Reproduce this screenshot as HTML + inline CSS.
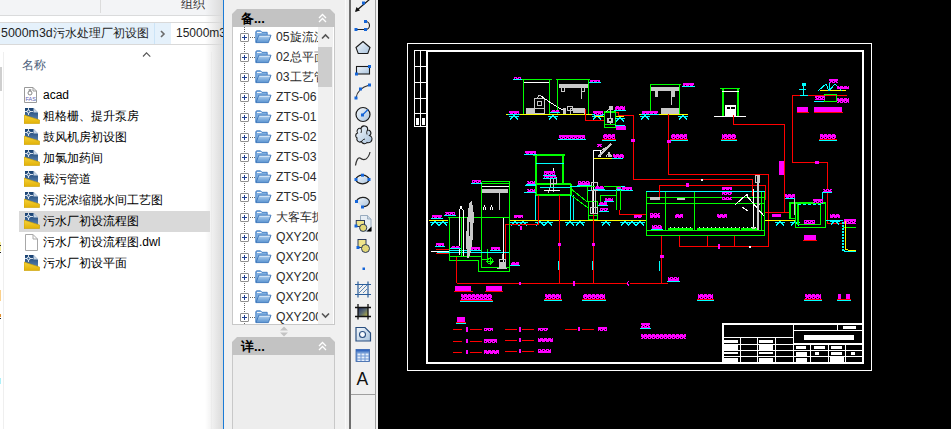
<!DOCTYPE html>
<html><head><meta charset="utf-8">
<style>
*{margin:0;padding:0;box-sizing:border-box}
html,body{width:951px;height:429px;overflow:hidden;background:#000;font-family:"Liberation Sans",sans-serif;}
.a{position:absolute}
#exp{left:0;top:0;width:223px;height:429px;background:#fff;overflow:hidden}
#exp svg{z-index:2}
#ribbon{left:0;top:0;width:223px;height:16px;background:#f3f4f6;border-bottom:1px solid #dadbdc}
#crumb{left:0;top:22px;width:223px;height:23px;background:#fff;border-top:1px solid #d9d9d9;border-bottom:1px solid #d9d9d9}
.t12{font-size:12px;line-height:14px;color:#1e1e1e;white-space:nowrap;z-index:3}
.row{position:absolute;left:19px;width:191px;height:21px;z-index:3}
.row .tx{position:absolute;left:24px;top:3px;font-size:12px;line-height:15px;color:#000;white-space:nowrap}
#blue{left:223px;top:0;width:1px;height:429px;background:#1b7bd6}
#mid{left:224px;top:0;width:154px;height:429px;background:#f0f0f0}
.tr{position:absolute;left:0;width:120px;height:20px}
.tr .tx{position:absolute;left:44px;top:2px;font-size:12.5px;line-height:15px;color:#222;white-space:nowrap}
</style></head><body>
<!-- explorer -->
<div id="exp" class="a">
  <div id="ribbon" class="a"></div>
  <div class="a" style="left:100px;top:0;width:1px;height:13px;background:#dcdcdc"></div>
  <div class="a t12" style="left:181px;top:-3px;color:#333;font-size:12.4px">组织</div>
  <div id="crumb" class="a"></div>
  <div class="a" style="left:0;top:23px;width:154px;height:21px;background:#e5f1fb"></div>
  <div class="a" style="left:154px;top:23px;width:1px;height:21px;background:#cce4f7"></div>
  <div class="a" style="left:155px;top:23px;width:16px;height:21px;background:#e5f1fb"></div>
  <div class="a t12" style="left:1px;top:26px;font-size:12.4px">5000m3d污水处理厂初设图</div>
  <svg class="a" style="left:159px;top:30px" width="8" height="8" viewBox="0 0 8 8"><path d="M2 1L5 4L2 7" fill="none" stroke="#6a6a6a" stroke-width="1.6"/></svg>
  <div class="a t12" style="left:176px;top:26px">15000m3d</div>
  <div class="a" style="left:205px;top:0;width:18px;height:429px;background:linear-gradient(90deg,rgba(220,220,220,0),#dadada)"></div>
  <div class="a" style="left:3px;top:52px;width:1px;height:377px;background:#efefef"></div>
  <div class="a" style="left:0;top:67px;width:2px;height:24px;background:#cfcfcf"></div>
  <div class="a" style="left:0;top:242px;width:1px;height:9px;background:#f7ec9a"></div>
  <div class="a" style="left:0;top:245px;width:1px;height:1px;background:#222"></div>
  <div class="a" style="left:0;top:252px;width:1px;height:1px;background:#222"></div>
  <div class="a" style="left:0;top:290px;width:1px;height:11px;background:#fbd08a"></div>
  <div class="a" style="left:0;top:314px;width:1px;height:3px;background:#e09030"></div>
  <div class="a" style="left:0;top:318px;width:1px;height:1px;background:#222"></div>
  <div class="a" style="left:0;top:378px;width:1px;height:6px;background:#aef0f8"></div>
  <div class="a" style="left:211px;top:52px;width:1px;height:377px;background:#ececec"></div>
  <div class="a t12" style="left:22px;top:58px;color:#4c607a">名称</div>
  <svg class="a" style="left:140px;top:50px" width="13" height="9" viewBox="140 50 13 9"><path d="M143 56.5L146.5 52.8L150.3 56.7" fill="none" stroke="#555" stroke-width="1.1"/></svg>
  <div class="row" style="top:211px;background:#d9d9d9;z-index:1"></div>
  <div class="row" style="top:85px"><div class="tx">acad</div></div>
  <div class="row" style="top:106px"><div class="tx">粗格栅、提升泵房</div></div>
  <div class="row" style="top:127px"><div class="tx">鼓风机房初设图</div></div>
  <div class="row" style="top:148px"><div class="tx">加氯加药间</div></div>
  <div class="row" style="top:169px"><div class="tx">截污管道</div></div>
  <div class="row" style="top:190px"><div class="tx">污泥浓缩脱水间工艺图</div></div>
  <div class="row" style="top:211px"><div class="tx">污水厂初设流程图</div></div>
  <div class="row" style="top:232px"><div class="tx">污水厂初设流程图.dwl</div></div>
  <div class="row" style="top:253px"><div class="tx">污水厂初设平面</div></div>
<svg class="a" style="left:24px;top:87px" width="14" height="17" viewBox="0 0 14 17"><path d="M0.5 0.5H9L12.5 4V15.5H0.5Z" fill="#fff" stroke="#9a9a9a"/><path d="M9 0.5V4H12.5" fill="none" stroke="#9a9a9a"/><circle cx="6" cy="6" r="2" fill="none" stroke="#777" stroke-width="0.9"/><path d="M6 2V4M4.5 3H7.5" stroke="#777" stroke-width="0.8"/><text x="1.5" y="14" font-size="5.5" font-family="Liberation Sans" fill="#5a5ab0">FAS</text></svg><svg class="a" style="left:24px;top:107px" width="16" height="17" viewBox="0 0 16 17"><defs><linearGradient id="gb0" x1="0" y1="0" x2="0" y2="1"><stop offset="0" stop-color="#163f70"/><stop offset="1" stop-color="#5a82b0"/></linearGradient><linearGradient id="gy0" x1="0" y1="0" x2="0" y2="1"><stop offset="0" stop-color="#f6d23a"/><stop offset="1" stop-color="#e2b208"/></linearGradient></defs><path d="M1 1H9.5L14 5.5V13H1Z" fill="url(#gb0)"/><path d="M9.5 1L14 5.5H9.5Z" fill="#c7d6e6"/><path d="M4.5 1V8M1 4.5H9" stroke="#fff" stroke-width="0.8"/><circle cx="4.5" cy="4.5" r="1.5" fill="#2a5a8e" stroke="#fff" stroke-width="0.9"/><path d="M0 8L15.5 13V16.5H0Z" fill="url(#gy0)" stroke="#caa000" stroke-width="0.6"/></svg><svg class="a" style="left:24px;top:128px" width="16" height="17" viewBox="0 0 16 17"><defs><linearGradient id="gb1" x1="0" y1="0" x2="0" y2="1"><stop offset="0" stop-color="#163f70"/><stop offset="1" stop-color="#5a82b0"/></linearGradient><linearGradient id="gy1" x1="0" y1="0" x2="0" y2="1"><stop offset="0" stop-color="#f6d23a"/><stop offset="1" stop-color="#e2b208"/></linearGradient></defs><path d="M1 1H9.5L14 5.5V13H1Z" fill="url(#gb1)"/><path d="M9.5 1L14 5.5H9.5Z" fill="#c7d6e6"/><path d="M4.5 1V8M1 4.5H9" stroke="#fff" stroke-width="0.8"/><circle cx="4.5" cy="4.5" r="1.5" fill="#2a5a8e" stroke="#fff" stroke-width="0.9"/><path d="M0 8L15.5 13V16.5H0Z" fill="url(#gy1)" stroke="#caa000" stroke-width="0.6"/></svg><svg class="a" style="left:24px;top:149px" width="16" height="17" viewBox="0 0 16 17"><defs><linearGradient id="gb2" x1="0" y1="0" x2="0" y2="1"><stop offset="0" stop-color="#163f70"/><stop offset="1" stop-color="#5a82b0"/></linearGradient><linearGradient id="gy2" x1="0" y1="0" x2="0" y2="1"><stop offset="0" stop-color="#f6d23a"/><stop offset="1" stop-color="#e2b208"/></linearGradient></defs><path d="M1 1H9.5L14 5.5V13H1Z" fill="url(#gb2)"/><path d="M9.5 1L14 5.5H9.5Z" fill="#c7d6e6"/><path d="M4.5 1V8M1 4.5H9" stroke="#fff" stroke-width="0.8"/><circle cx="4.5" cy="4.5" r="1.5" fill="#2a5a8e" stroke="#fff" stroke-width="0.9"/><path d="M0 8L15.5 13V16.5H0Z" fill="url(#gy2)" stroke="#caa000" stroke-width="0.6"/></svg><svg class="a" style="left:24px;top:170px" width="16" height="17" viewBox="0 0 16 17"><defs><linearGradient id="gb3" x1="0" y1="0" x2="0" y2="1"><stop offset="0" stop-color="#163f70"/><stop offset="1" stop-color="#5a82b0"/></linearGradient><linearGradient id="gy3" x1="0" y1="0" x2="0" y2="1"><stop offset="0" stop-color="#f6d23a"/><stop offset="1" stop-color="#e2b208"/></linearGradient></defs><path d="M1 1H9.5L14 5.5V13H1Z" fill="url(#gb3)"/><path d="M9.5 1L14 5.5H9.5Z" fill="#c7d6e6"/><path d="M4.5 1V8M1 4.5H9" stroke="#fff" stroke-width="0.8"/><circle cx="4.5" cy="4.5" r="1.5" fill="#2a5a8e" stroke="#fff" stroke-width="0.9"/><path d="M0 8L15.5 13V16.5H0Z" fill="url(#gy3)" stroke="#caa000" stroke-width="0.6"/></svg><svg class="a" style="left:24px;top:191px" width="16" height="17" viewBox="0 0 16 17"><defs><linearGradient id="gb4" x1="0" y1="0" x2="0" y2="1"><stop offset="0" stop-color="#163f70"/><stop offset="1" stop-color="#5a82b0"/></linearGradient><linearGradient id="gy4" x1="0" y1="0" x2="0" y2="1"><stop offset="0" stop-color="#f6d23a"/><stop offset="1" stop-color="#e2b208"/></linearGradient></defs><path d="M1 1H9.5L14 5.5V13H1Z" fill="url(#gb4)"/><path d="M9.5 1L14 5.5H9.5Z" fill="#c7d6e6"/><path d="M4.5 1V8M1 4.5H9" stroke="#fff" stroke-width="0.8"/><circle cx="4.5" cy="4.5" r="1.5" fill="#2a5a8e" stroke="#fff" stroke-width="0.9"/><path d="M0 8L15.5 13V16.5H0Z" fill="url(#gy4)" stroke="#caa000" stroke-width="0.6"/></svg><svg class="a" style="left:24px;top:212px" width="16" height="17" viewBox="0 0 16 17"><defs><linearGradient id="gb5" x1="0" y1="0" x2="0" y2="1"><stop offset="0" stop-color="#163f70"/><stop offset="1" stop-color="#5a82b0"/></linearGradient><linearGradient id="gy5" x1="0" y1="0" x2="0" y2="1"><stop offset="0" stop-color="#f6d23a"/><stop offset="1" stop-color="#e2b208"/></linearGradient></defs><path d="M1 1H9.5L14 5.5V13H1Z" fill="url(#gb5)"/><path d="M9.5 1L14 5.5H9.5Z" fill="#c7d6e6"/><path d="M4.5 1V8M1 4.5H9" stroke="#fff" stroke-width="0.8"/><circle cx="4.5" cy="4.5" r="1.5" fill="#2a5a8e" stroke="#fff" stroke-width="0.9"/><path d="M0 8L15.5 13V16.5H0Z" fill="url(#gy5)" stroke="#caa000" stroke-width="0.6"/></svg><svg class="a" style="left:24px;top:254px" width="16" height="17" viewBox="0 0 16 17"><defs><linearGradient id="gb6" x1="0" y1="0" x2="0" y2="1"><stop offset="0" stop-color="#163f70"/><stop offset="1" stop-color="#5a82b0"/></linearGradient><linearGradient id="gy6" x1="0" y1="0" x2="0" y2="1"><stop offset="0" stop-color="#f6d23a"/><stop offset="1" stop-color="#e2b208"/></linearGradient></defs><path d="M1 1H9.5L14 5.5V13H1Z" fill="url(#gb6)"/><path d="M9.5 1L14 5.5H9.5Z" fill="#c7d6e6"/><path d="M4.5 1V8M1 4.5H9" stroke="#fff" stroke-width="0.8"/><circle cx="4.5" cy="4.5" r="1.5" fill="#2a5a8e" stroke="#fff" stroke-width="0.9"/><path d="M0 8L15.5 13V16.5H0Z" fill="url(#gy6)" stroke="#caa000" stroke-width="0.6"/></svg><svg class="a" style="left:25px;top:234px" width="13" height="17" viewBox="0 0 13 17"><path d="M0.5 0.5H8L12.5 5V16.5H0.5Z" fill="#fff" stroke="#a8a8a8"/><path d="M8 0.5V5H12.5" fill="none" stroke="#a8a8a8"/></svg>
</div>
<div id="blue" class="a"></div>
<!-- middle -->
<div id="mid" class="a">
<div class="a" style="left:8px;top:9px;width:103px;height:18px;background:#c3c3c3;clip-path:polygon(5px 0,98px 0,103px 5px,103px 18px,0 18px,0 5px)"></div>
<div class="a" style="left:17px;top:11px;font-size:13px;font-weight:bold;line-height:15px;color:#000">备...</div>
<svg class="a" style="left:94px;top:13px" width="9" height="10" viewBox="0 0 9 10"><path d="M1 5L4.5 1.5L8 5M1 9L4.5 5.5L8 9" fill="none" stroke="#fff" stroke-width="1.3"/></svg>
<div class="a" style="left:8px;top:27px;width:103px;height:298px;background:#fff;border:1px solid #c8c8c8;border-top:none"></div>
<div class="a" style="left:9px;top:27px;width:85px;height:297px;overflow:hidden">
<div class="a" style="left:11px;top:0;width:1px;height:297px;border-left:1px dotted #666"></div>
<div class="a" style="left:7px;top:6px;width:9px;height:9px;border:1px solid #8f8f8f;background:#fff;border-radius:1px"></div>
<div class="a" style="left:9px;top:10px;width:5px;height:1px;background:#1f3f8f"></div>
<div class="a" style="left:11px;top:8px;width:1px;height:5px;background:#1f3f8f"></div>
<div class="a" style="left:17px;top:10px;width:5px;height:1px;border-top:1px dotted #666"></div>
<svg class="a" style="left:22px;top:3px" width="17" height="14" viewBox="0 0 17 14"><defs><linearGradient id="fb0" x1="0" y1="0" x2="0" y2="1"><stop offset="0" stop-color="#b5d3f0"/><stop offset="1" stop-color="#5a93d0"/></linearGradient></defs><path d="M0.8 12.5V2Q0.8 0.8 2 0.8H5.5L7 2.3H12.2V5" fill="#7eaee0" stroke="#3f7cc2" stroke-width="0.9"/><path d="M2 2.5H6.5" stroke="#fff" stroke-width="0.9"/><path d="M3.8 5.2H16L13.4 12.6H1Z" fill="url(#fb0)" stroke="#3a75ba" stroke-width="0.9"/><path d="M4.5 6.3H14.8" stroke="#e8f2fc" stroke-width="0.8"/></svg>
<div class="a" style="left:43px;top:3px;font-size:12.2px;line-height:15px;color:#2b2b2b;white-space:nowrap">05旋流沉砂池</div>
<div class="a" style="left:7px;top:26px;width:9px;height:9px;border:1px solid #8f8f8f;background:#fff;border-radius:1px"></div>
<div class="a" style="left:9px;top:30px;width:5px;height:1px;background:#1f3f8f"></div>
<div class="a" style="left:11px;top:28px;width:1px;height:5px;background:#1f3f8f"></div>
<div class="a" style="left:17px;top:30px;width:5px;height:1px;border-top:1px dotted #666"></div>
<svg class="a" style="left:22px;top:23px" width="17" height="14" viewBox="0 0 17 14"><defs><linearGradient id="fb1" x1="0" y1="0" x2="0" y2="1"><stop offset="0" stop-color="#b5d3f0"/><stop offset="1" stop-color="#5a93d0"/></linearGradient></defs><path d="M0.8 12.5V2Q0.8 0.8 2 0.8H5.5L7 2.3H12.2V5" fill="#7eaee0" stroke="#3f7cc2" stroke-width="0.9"/><path d="M2 2.5H6.5" stroke="#fff" stroke-width="0.9"/><path d="M3.8 5.2H16L13.4 12.6H1Z" fill="url(#fb1)" stroke="#3a75ba" stroke-width="0.9"/><path d="M4.5 6.3H14.8" stroke="#e8f2fc" stroke-width="0.8"/></svg>
<div class="a" style="left:43px;top:23px;font-size:12.2px;line-height:15px;color:#2b2b2b;white-space:nowrap">02总平面图</div>
<div class="a" style="left:7px;top:46px;width:9px;height:9px;border:1px solid #8f8f8f;background:#fff;border-radius:1px"></div>
<div class="a" style="left:9px;top:50px;width:5px;height:1px;background:#1f3f8f"></div>
<div class="a" style="left:11px;top:48px;width:1px;height:5px;background:#1f3f8f"></div>
<div class="a" style="left:17px;top:50px;width:5px;height:1px;border-top:1px dotted #666"></div>
<svg class="a" style="left:22px;top:43px" width="17" height="14" viewBox="0 0 17 14"><defs><linearGradient id="fb2" x1="0" y1="0" x2="0" y2="1"><stop offset="0" stop-color="#b5d3f0"/><stop offset="1" stop-color="#5a93d0"/></linearGradient></defs><path d="M0.8 12.5V2Q0.8 0.8 2 0.8H5.5L7 2.3H12.2V5" fill="#7eaee0" stroke="#3f7cc2" stroke-width="0.9"/><path d="M2 2.5H6.5" stroke="#fff" stroke-width="0.9"/><path d="M3.8 5.2H16L13.4 12.6H1Z" fill="url(#fb2)" stroke="#3a75ba" stroke-width="0.9"/><path d="M4.5 6.3H14.8" stroke="#e8f2fc" stroke-width="0.8"/></svg>
<div class="a" style="left:43px;top:43px;font-size:12.2px;line-height:15px;color:#2b2b2b;white-space:nowrap">03工艺管线</div>
<div class="a" style="left:7px;top:66px;width:9px;height:9px;border:1px solid #8f8f8f;background:#fff;border-radius:1px"></div>
<div class="a" style="left:9px;top:70px;width:5px;height:1px;background:#1f3f8f"></div>
<div class="a" style="left:11px;top:68px;width:1px;height:5px;background:#1f3f8f"></div>
<div class="a" style="left:17px;top:70px;width:5px;height:1px;border-top:1px dotted #666"></div>
<svg class="a" style="left:22px;top:63px" width="17" height="14" viewBox="0 0 17 14"><defs><linearGradient id="fb3" x1="0" y1="0" x2="0" y2="1"><stop offset="0" stop-color="#b5d3f0"/><stop offset="1" stop-color="#5a93d0"/></linearGradient></defs><path d="M0.8 12.5V2Q0.8 0.8 2 0.8H5.5L7 2.3H12.2V5" fill="#7eaee0" stroke="#3f7cc2" stroke-width="0.9"/><path d="M2 2.5H6.5" stroke="#fff" stroke-width="0.9"/><path d="M3.8 5.2H16L13.4 12.6H1Z" fill="url(#fb3)" stroke="#3a75ba" stroke-width="0.9"/><path d="M4.5 6.3H14.8" stroke="#e8f2fc" stroke-width="0.8"/></svg>
<div class="a" style="left:43px;top:63px;font-size:12.2px;line-height:15px;color:#2b2b2b;white-space:nowrap">ZTS-06</div>
<div class="a" style="left:7px;top:86px;width:9px;height:9px;border:1px solid #8f8f8f;background:#fff;border-radius:1px"></div>
<div class="a" style="left:9px;top:90px;width:5px;height:1px;background:#1f3f8f"></div>
<div class="a" style="left:11px;top:88px;width:1px;height:5px;background:#1f3f8f"></div>
<div class="a" style="left:17px;top:90px;width:5px;height:1px;border-top:1px dotted #666"></div>
<svg class="a" style="left:22px;top:83px" width="17" height="14" viewBox="0 0 17 14"><defs><linearGradient id="fb4" x1="0" y1="0" x2="0" y2="1"><stop offset="0" stop-color="#b5d3f0"/><stop offset="1" stop-color="#5a93d0"/></linearGradient></defs><path d="M0.8 12.5V2Q0.8 0.8 2 0.8H5.5L7 2.3H12.2V5" fill="#7eaee0" stroke="#3f7cc2" stroke-width="0.9"/><path d="M2 2.5H6.5" stroke="#fff" stroke-width="0.9"/><path d="M3.8 5.2H16L13.4 12.6H1Z" fill="url(#fb4)" stroke="#3a75ba" stroke-width="0.9"/><path d="M4.5 6.3H14.8" stroke="#e8f2fc" stroke-width="0.8"/></svg>
<div class="a" style="left:43px;top:83px;font-size:12.2px;line-height:15px;color:#2b2b2b;white-space:nowrap">ZTS-01</div>
<div class="a" style="left:7px;top:106px;width:9px;height:9px;border:1px solid #8f8f8f;background:#fff;border-radius:1px"></div>
<div class="a" style="left:9px;top:110px;width:5px;height:1px;background:#1f3f8f"></div>
<div class="a" style="left:11px;top:108px;width:1px;height:5px;background:#1f3f8f"></div>
<div class="a" style="left:17px;top:110px;width:5px;height:1px;border-top:1px dotted #666"></div>
<svg class="a" style="left:22px;top:103px" width="17" height="14" viewBox="0 0 17 14"><defs><linearGradient id="fb5" x1="0" y1="0" x2="0" y2="1"><stop offset="0" stop-color="#b5d3f0"/><stop offset="1" stop-color="#5a93d0"/></linearGradient></defs><path d="M0.8 12.5V2Q0.8 0.8 2 0.8H5.5L7 2.3H12.2V5" fill="#7eaee0" stroke="#3f7cc2" stroke-width="0.9"/><path d="M2 2.5H6.5" stroke="#fff" stroke-width="0.9"/><path d="M3.8 5.2H16L13.4 12.6H1Z" fill="url(#fb5)" stroke="#3a75ba" stroke-width="0.9"/><path d="M4.5 6.3H14.8" stroke="#e8f2fc" stroke-width="0.8"/></svg>
<div class="a" style="left:43px;top:103px;font-size:12.2px;line-height:15px;color:#2b2b2b;white-space:nowrap">ZTS-02</div>
<div class="a" style="left:7px;top:126px;width:9px;height:9px;border:1px solid #8f8f8f;background:#fff;border-radius:1px"></div>
<div class="a" style="left:9px;top:130px;width:5px;height:1px;background:#1f3f8f"></div>
<div class="a" style="left:11px;top:128px;width:1px;height:5px;background:#1f3f8f"></div>
<div class="a" style="left:17px;top:130px;width:5px;height:1px;border-top:1px dotted #666"></div>
<svg class="a" style="left:22px;top:123px" width="17" height="14" viewBox="0 0 17 14"><defs><linearGradient id="fb6" x1="0" y1="0" x2="0" y2="1"><stop offset="0" stop-color="#b5d3f0"/><stop offset="1" stop-color="#5a93d0"/></linearGradient></defs><path d="M0.8 12.5V2Q0.8 0.8 2 0.8H5.5L7 2.3H12.2V5" fill="#7eaee0" stroke="#3f7cc2" stroke-width="0.9"/><path d="M2 2.5H6.5" stroke="#fff" stroke-width="0.9"/><path d="M3.8 5.2H16L13.4 12.6H1Z" fill="url(#fb6)" stroke="#3a75ba" stroke-width="0.9"/><path d="M4.5 6.3H14.8" stroke="#e8f2fc" stroke-width="0.8"/></svg>
<div class="a" style="left:43px;top:123px;font-size:12.2px;line-height:15px;color:#2b2b2b;white-space:nowrap">ZTS-03</div>
<div class="a" style="left:7px;top:146px;width:9px;height:9px;border:1px solid #8f8f8f;background:#fff;border-radius:1px"></div>
<div class="a" style="left:9px;top:150px;width:5px;height:1px;background:#1f3f8f"></div>
<div class="a" style="left:11px;top:148px;width:1px;height:5px;background:#1f3f8f"></div>
<div class="a" style="left:17px;top:150px;width:5px;height:1px;border-top:1px dotted #666"></div>
<svg class="a" style="left:22px;top:143px" width="17" height="14" viewBox="0 0 17 14"><defs><linearGradient id="fb7" x1="0" y1="0" x2="0" y2="1"><stop offset="0" stop-color="#b5d3f0"/><stop offset="1" stop-color="#5a93d0"/></linearGradient></defs><path d="M0.8 12.5V2Q0.8 0.8 2 0.8H5.5L7 2.3H12.2V5" fill="#7eaee0" stroke="#3f7cc2" stroke-width="0.9"/><path d="M2 2.5H6.5" stroke="#fff" stroke-width="0.9"/><path d="M3.8 5.2H16L13.4 12.6H1Z" fill="url(#fb7)" stroke="#3a75ba" stroke-width="0.9"/><path d="M4.5 6.3H14.8" stroke="#e8f2fc" stroke-width="0.8"/></svg>
<div class="a" style="left:43px;top:143px;font-size:12.2px;line-height:15px;color:#2b2b2b;white-space:nowrap">ZTS-04</div>
<div class="a" style="left:7px;top:166px;width:9px;height:9px;border:1px solid #8f8f8f;background:#fff;border-radius:1px"></div>
<div class="a" style="left:9px;top:170px;width:5px;height:1px;background:#1f3f8f"></div>
<div class="a" style="left:11px;top:168px;width:1px;height:5px;background:#1f3f8f"></div>
<div class="a" style="left:17px;top:170px;width:5px;height:1px;border-top:1px dotted #666"></div>
<svg class="a" style="left:22px;top:163px" width="17" height="14" viewBox="0 0 17 14"><defs><linearGradient id="fb8" x1="0" y1="0" x2="0" y2="1"><stop offset="0" stop-color="#b5d3f0"/><stop offset="1" stop-color="#5a93d0"/></linearGradient></defs><path d="M0.8 12.5V2Q0.8 0.8 2 0.8H5.5L7 2.3H12.2V5" fill="#7eaee0" stroke="#3f7cc2" stroke-width="0.9"/><path d="M2 2.5H6.5" stroke="#fff" stroke-width="0.9"/><path d="M3.8 5.2H16L13.4 12.6H1Z" fill="url(#fb8)" stroke="#3a75ba" stroke-width="0.9"/><path d="M4.5 6.3H14.8" stroke="#e8f2fc" stroke-width="0.8"/></svg>
<div class="a" style="left:43px;top:163px;font-size:12.2px;line-height:15px;color:#2b2b2b;white-space:nowrap">ZTS-05</div>
<div class="a" style="left:7px;top:186px;width:9px;height:9px;border:1px solid #8f8f8f;background:#fff;border-radius:1px"></div>
<div class="a" style="left:9px;top:190px;width:5px;height:1px;background:#1f3f8f"></div>
<div class="a" style="left:11px;top:188px;width:1px;height:5px;background:#1f3f8f"></div>
<div class="a" style="left:17px;top:190px;width:5px;height:1px;border-top:1px dotted #666"></div>
<svg class="a" style="left:22px;top:183px" width="17" height="14" viewBox="0 0 17 14"><defs><linearGradient id="fb9" x1="0" y1="0" x2="0" y2="1"><stop offset="0" stop-color="#b5d3f0"/><stop offset="1" stop-color="#5a93d0"/></linearGradient></defs><path d="M0.8 12.5V2Q0.8 0.8 2 0.8H5.5L7 2.3H12.2V5" fill="#7eaee0" stroke="#3f7cc2" stroke-width="0.9"/><path d="M2 2.5H6.5" stroke="#fff" stroke-width="0.9"/><path d="M3.8 5.2H16L13.4 12.6H1Z" fill="url(#fb9)" stroke="#3a75ba" stroke-width="0.9"/><path d="M4.5 6.3H14.8" stroke="#e8f2fc" stroke-width="0.8"/></svg>
<div class="a" style="left:43px;top:183px;font-size:12.2px;line-height:15px;color:#2b2b2b;white-space:nowrap">大客车拆</div>
<div class="a" style="left:7px;top:206px;width:9px;height:9px;border:1px solid #8f8f8f;background:#fff;border-radius:1px"></div>
<div class="a" style="left:9px;top:210px;width:5px;height:1px;background:#1f3f8f"></div>
<div class="a" style="left:11px;top:208px;width:1px;height:5px;background:#1f3f8f"></div>
<div class="a" style="left:17px;top:210px;width:5px;height:1px;border-top:1px dotted #666"></div>
<svg class="a" style="left:22px;top:203px" width="17" height="14" viewBox="0 0 17 14"><defs><linearGradient id="fb10" x1="0" y1="0" x2="0" y2="1"><stop offset="0" stop-color="#b5d3f0"/><stop offset="1" stop-color="#5a93d0"/></linearGradient></defs><path d="M0.8 12.5V2Q0.8 0.8 2 0.8H5.5L7 2.3H12.2V5" fill="#7eaee0" stroke="#3f7cc2" stroke-width="0.9"/><path d="M2 2.5H6.5" stroke="#fff" stroke-width="0.9"/><path d="M3.8 5.2H16L13.4 12.6H1Z" fill="url(#fb10)" stroke="#3a75ba" stroke-width="0.9"/><path d="M4.5 6.3H14.8" stroke="#e8f2fc" stroke-width="0.8"/></svg>
<div class="a" style="left:43px;top:203px;font-size:12.2px;line-height:15px;color:#2b2b2b;white-space:nowrap">QXY2008</div>
<div class="a" style="left:7px;top:226px;width:9px;height:9px;border:1px solid #8f8f8f;background:#fff;border-radius:1px"></div>
<div class="a" style="left:9px;top:230px;width:5px;height:1px;background:#1f3f8f"></div>
<div class="a" style="left:11px;top:228px;width:1px;height:5px;background:#1f3f8f"></div>
<div class="a" style="left:17px;top:230px;width:5px;height:1px;border-top:1px dotted #666"></div>
<svg class="a" style="left:22px;top:223px" width="17" height="14" viewBox="0 0 17 14"><defs><linearGradient id="fb11" x1="0" y1="0" x2="0" y2="1"><stop offset="0" stop-color="#b5d3f0"/><stop offset="1" stop-color="#5a93d0"/></linearGradient></defs><path d="M0.8 12.5V2Q0.8 0.8 2 0.8H5.5L7 2.3H12.2V5" fill="#7eaee0" stroke="#3f7cc2" stroke-width="0.9"/><path d="M2 2.5H6.5" stroke="#fff" stroke-width="0.9"/><path d="M3.8 5.2H16L13.4 12.6H1Z" fill="url(#fb11)" stroke="#3a75ba" stroke-width="0.9"/><path d="M4.5 6.3H14.8" stroke="#e8f2fc" stroke-width="0.8"/></svg>
<div class="a" style="left:43px;top:223px;font-size:12.2px;line-height:15px;color:#2b2b2b;white-space:nowrap">QXY2008</div>
<div class="a" style="left:7px;top:246px;width:9px;height:9px;border:1px solid #8f8f8f;background:#fff;border-radius:1px"></div>
<div class="a" style="left:9px;top:250px;width:5px;height:1px;background:#1f3f8f"></div>
<div class="a" style="left:11px;top:248px;width:1px;height:5px;background:#1f3f8f"></div>
<div class="a" style="left:17px;top:250px;width:5px;height:1px;border-top:1px dotted #666"></div>
<svg class="a" style="left:22px;top:243px" width="17" height="14" viewBox="0 0 17 14"><defs><linearGradient id="fb12" x1="0" y1="0" x2="0" y2="1"><stop offset="0" stop-color="#b5d3f0"/><stop offset="1" stop-color="#5a93d0"/></linearGradient></defs><path d="M0.8 12.5V2Q0.8 0.8 2 0.8H5.5L7 2.3H12.2V5" fill="#7eaee0" stroke="#3f7cc2" stroke-width="0.9"/><path d="M2 2.5H6.5" stroke="#fff" stroke-width="0.9"/><path d="M3.8 5.2H16L13.4 12.6H1Z" fill="url(#fb12)" stroke="#3a75ba" stroke-width="0.9"/><path d="M4.5 6.3H14.8" stroke="#e8f2fc" stroke-width="0.8"/></svg>
<div class="a" style="left:43px;top:243px;font-size:12.2px;line-height:15px;color:#2b2b2b;white-space:nowrap">QXY2008</div>
<div class="a" style="left:7px;top:266px;width:9px;height:9px;border:1px solid #8f8f8f;background:#fff;border-radius:1px"></div>
<div class="a" style="left:9px;top:270px;width:5px;height:1px;background:#1f3f8f"></div>
<div class="a" style="left:11px;top:268px;width:1px;height:5px;background:#1f3f8f"></div>
<div class="a" style="left:17px;top:270px;width:5px;height:1px;border-top:1px dotted #666"></div>
<svg class="a" style="left:22px;top:263px" width="17" height="14" viewBox="0 0 17 14"><defs><linearGradient id="fb13" x1="0" y1="0" x2="0" y2="1"><stop offset="0" stop-color="#b5d3f0"/><stop offset="1" stop-color="#5a93d0"/></linearGradient></defs><path d="M0.8 12.5V2Q0.8 0.8 2 0.8H5.5L7 2.3H12.2V5" fill="#7eaee0" stroke="#3f7cc2" stroke-width="0.9"/><path d="M2 2.5H6.5" stroke="#fff" stroke-width="0.9"/><path d="M3.8 5.2H16L13.4 12.6H1Z" fill="url(#fb13)" stroke="#3a75ba" stroke-width="0.9"/><path d="M4.5 6.3H14.8" stroke="#e8f2fc" stroke-width="0.8"/></svg>
<div class="a" style="left:43px;top:263px;font-size:12.2px;line-height:15px;color:#2b2b2b;white-space:nowrap">QXY2008</div>
<div class="a" style="left:7px;top:286px;width:9px;height:9px;border:1px solid #8f8f8f;background:#fff;border-radius:1px"></div>
<div class="a" style="left:9px;top:290px;width:5px;height:1px;background:#1f3f8f"></div>
<div class="a" style="left:11px;top:288px;width:1px;height:5px;background:#1f3f8f"></div>
<div class="a" style="left:17px;top:290px;width:5px;height:1px;border-top:1px dotted #666"></div>
<svg class="a" style="left:22px;top:283px" width="17" height="14" viewBox="0 0 17 14"><defs><linearGradient id="fb14" x1="0" y1="0" x2="0" y2="1"><stop offset="0" stop-color="#b5d3f0"/><stop offset="1" stop-color="#5a93d0"/></linearGradient></defs><path d="M0.8 12.5V2Q0.8 0.8 2 0.8H5.5L7 2.3H12.2V5" fill="#7eaee0" stroke="#3f7cc2" stroke-width="0.9"/><path d="M2 2.5H6.5" stroke="#fff" stroke-width="0.9"/><path d="M3.8 5.2H16L13.4 12.6H1Z" fill="url(#fb14)" stroke="#3a75ba" stroke-width="0.9"/><path d="M4.5 6.3H14.8" stroke="#e8f2fc" stroke-width="0.8"/></svg>
<div class="a" style="left:43px;top:283px;font-size:12.2px;line-height:15px;color:#2b2b2b;white-space:nowrap">QXY2008</div>
</div>
<div class="a" style="left:94px;top:27px;width:15px;height:297px;background:#f0f0f0"></div>
<svg class="a" style="left:97px;top:33px" width="9" height="7" viewBox="0 0 9 7"><path d="M1 5.5L4.5 2L8 5.5" fill="none" stroke="#555" stroke-width="1.6"/></svg>
<div class="a" style="left:94px;top:47px;width:14px;height:40px;background:#cdcdcd"></div>
<svg class="a" style="left:97px;top:312px" width="9" height="7" viewBox="0 0 9 7"><path d="M1 1.5L4.5 5L8 1.5" fill="none" stroke="#555" stroke-width="1.6"/></svg>
<svg class="a" style="left:55px;top:326px" width="10" height="11" viewBox="0 0 10 11"><path d="M1 4.5L5 0.5L9 4.5ZM1 6.5L5 10.5L9 6.5Z" fill="#c4c4c4"/></svg>
<div class="a" style="left:8px;top:337px;width:103px;height:18px;background:#c3c3c3;clip-path:polygon(5px 0,98px 0,103px 5px,103px 18px,0 18px,0 5px)"></div>
<div class="a" style="left:17px;top:339px;font-size:13px;font-weight:bold;line-height:15px;color:#000">详...</div>
<svg class="a" style="left:94px;top:341px" width="9" height="10" viewBox="0 0 9 10"><path d="M1 5L4.5 1.5L8 5M1 9L4.5 5.5L8 9" fill="none" stroke="#fff" stroke-width="1.3"/></svg>
<div class="a" style="left:8px;top:355px;width:103px;height:80px;background:#ededed;border:1px solid #c8c8c8;border-top:none"></div>
<div class="a" style="left:121px;top:0;width:1px;height:429px;background:#fafafa"></div>
<div class="a" style="left:125px;top:0;width:2px;height:429px;background:#6e6e6e"></div>
<div class="a" style="left:151px;top:0;width:1px;height:429px;background:#a0a0a0"></div>
<div class="a" style="left:127px;top:394px;width:24px;height:1px;background:#a0a0a0"></div>
</div>
<svg class="a" style="left:350px;top:0" width="28" height="400" viewBox="350 0 28 400">
<defs><linearGradient id="tg" x1="0" y1="0" x2="1" y2="1"><stop offset="0" stop-color="#f4f8fc"/><stop offset="1" stop-color="#a9c3dd"/></linearGradient><linearGradient id="tgr" x1="0" y1="0" x2="1" y2="1"><stop offset="0" stop-color="#1e2a66"/><stop offset="0.5" stop-color="#5a6a70"/><stop offset="1" stop-color="#c8c040"/></linearGradient></defs>
<path d="M356 11L370 -1" stroke="#111" stroke-width="1.2"/><path d="M355 12L356.5 7L360 10.5Z" fill="#111"/><rect x="362.0" y="1.5" width="3" height="3" fill="#1565d8"/>
<path d="M356 29.5H365.5M365.5 21.5A4 4 0 0 1 365.5 29.5" fill="none" stroke="#222" stroke-width="1.1"/><rect x="354.5" y="28.0" width="3" height="3" fill="#1565d8"/><rect x="364.0" y="28.0" width="3" height="3" fill="#1565d8"/><rect x="364.0" y="20.0" width="3" height="3" fill="#1565d8"/>
<path d="M363 41.5L370 47.5L367.8 53.5H358.2L356 47.5Z" fill="url(#tg)" stroke="#1a1a1a" stroke-width="1.1"/>
<rect x="356.5" y="66.5" width="13" height="7.5" fill="url(#tg)" stroke="#1a1a1a" stroke-width="1.1"/><rect x="355.0" y="72.5" width="3" height="3" fill="#1565d8"/><rect x="368.0" y="65.0" width="3" height="3" fill="#1565d8"/>
<path d="M356 98Q357.5 88 369.5 85" fill="none" stroke="#333" stroke-width="1.1"/><rect x="354.5" y="96.5" width="3" height="3" fill="#1565d8"/><rect x="359.0" y="87.5" width="3" height="3" fill="#1565d8"/><rect x="368.0" y="83.5" width="3" height="3" fill="#1565d8"/>
<circle cx="363" cy="114.5" r="7" fill="url(#tg)" stroke="#1a1a1a" stroke-width="1.2"/><path d="M362.5 115L368 109.5" stroke="#1565d8" stroke-width="1.2"/><rect x="361.0" y="113.5" width="3" height="3" fill="#1565d8"/>
<path d="M357.5 133A3 3 0 0 1 361 128.5A3.2 3.2 0 0 1 367.5 130A3 3 0 0 1 369.5 135.5A3.5 3.5 0 0 1 367 142.5A3.2 3.2 0 0 1 361.5 141.5A3 3 0 0 1 357 138A2.8 2.8 0 0 1 357.5 133Z" fill="url(#tg)" stroke="#1a1a1a" stroke-width="1.1"/><path d="M361 128.5Q362 131 361 133M367.5 130Q366 132 367 134.5M361.5 141.5Q363 139 365 139" fill="none" stroke="#1a1a1a" stroke-width="0.9"/>
<path d="M355.5 165.5Q357 157 360 158Q363 160.5 366 159Q369 157 370 152" fill="none" stroke="#333" stroke-width="1.2"/>
<ellipse cx="362.5" cy="179.5" rx="6.5" ry="4.3" fill="url(#tg)" stroke="#1a1a1a" stroke-width="1.2"/><rect x="354.5" y="178.0" width="3" height="3" fill="#1565d8"/><rect x="367.5" y="178.0" width="3" height="3" fill="#1565d8"/><rect x="361.0" y="173.7" width="3" height="3" fill="#1565d8"/>
<path d="M356.5 202.5A6.5 4.6 0 1 1 362.5 206.6" fill="url(#tg)" stroke="#222" stroke-width="1.2"/><rect x="355.0" y="200.0" width="3" height="3" fill="#1565d8"/><rect x="361.0" y="205.5" width="3" height="3" fill="#1565d8"/>
<path d="M360.5 215.5H367.5L371 219V231H360.5Z" fill="#e6edf4" stroke="#8ea3b8" stroke-width="0.9"/><path d="M367.5 215.5V219H371" fill="#c9d6e3" stroke="#8ea3b8" stroke-width="0.8"/><rect x="356.2" y="220.5" width="8.3" height="6" fill="#efe48a" stroke="#1a2a50" stroke-width="0.9"/><circle cx="363.2" cy="227.8" r="3.6" fill="#e3d878" stroke="#1a2a50" stroke-width="0.9"/><path d="M366.5 231.5H371.5V226.5Z" fill="#000"/><rect x="354.5" y="224.5" width="3" height="3" fill="#1565d8"/>
<rect x="358" y="239.5" width="8" height="8" fill="#efe48a" stroke="#1a2a50" stroke-width="0.9"/><circle cx="365.5" cy="248.5" r="4" fill="#e3d878" stroke="#1a2a50" stroke-width="0.9"/><rect x="356.5" y="246.0" width="3" height="3" fill="#1565d8"/>
<rect x="362.5" y="267.5" width="2.5" height="2.5" fill="#1565d8"/>
<path d="M355 284.5H371M355 294.5H371M358 281.5V297.5M368 281.5V297.5" stroke="#2a5d9a" stroke-width="1.2"/><path d="M359 293L367 285M359 289L363 285M363 293L367 289" stroke="#5f87b5" stroke-width="1"/>
<rect x="358" y="307" width="10" height="10" fill="url(#tgr)"/><path d="M355 307.5H371M355 316.5H371M358 304V319.5M368 304V319.5" stroke="#111" stroke-width="1.3"/>
<path d="M356 327.5H365L370.5 333V341H356Z" fill="url(#tg)" stroke="#2a4f80" stroke-width="1.2"/><circle cx="362.5" cy="334.5" r="3" fill="#f8fbff" stroke="#2a4f80" stroke-width="1.1"/>
<rect x="356" y="349.5" width="13.5" height="12" fill="#6f98d4" stroke="#3a64a8" stroke-width="0.8"/><rect x="356" y="349.5" width="13.5" height="2" fill="#3568bf"/><path d="M357.5 353.5h3v2h-3zM361.5 353.5h3v2h-3zM365.5 353.5h3v2h-3zM357.5 356.5h3v2h-3zM361.5 356.5h3v2h-3zM365.5 356.5h3v2h-3zM357.5 359.5h3v1.5h-3zM361.5 359.5h3v1.5h-3zM365.5 359.5h3v1.5h-3z" fill="#e6eefa"/>
<text x="356.5" y="384.5" font-family="Liberation Sans" font-size="17.5" fill="#111">A</text>
</svg>
<div class="a" style="left:378px;top:0;width:573px;height:429px;background:#000"></div>
<!--CAD--><svg class="a" style="left:0;top:0" width="951" height="429" viewBox="0 0 951 429" shape-rendering="crispEdges"><defs><pattern id="mt" width="4" height="4" patternUnits="userSpaceOnUse"><rect width="4" height="4" fill="#ff00ff"/><rect x="1" y="1" width="1" height="1" fill="#000"/><rect x="3" y="2" width="1" height="1" fill="#000"/></pattern></defs><rect x="407.5" y="43.5" width="464.0" height="327.0" fill="none" stroke="#ffffff" stroke-width="1.0"/><path d="M426.0 51.0 L864.0 51.0" stroke="#ffffff" stroke-width="2.0" fill="none"/><path d="M426.0 363.0 L864.0 363.0" stroke="#ffffff" stroke-width="2.0" fill="none"/><path d="M427.0 50.0 L427.0 364.0" stroke="#ffffff" stroke-width="2.0" fill="none"/><path d="M863.0 50.0 L863.0 364.0" stroke="#ffffff" stroke-width="2.0" fill="none"/><rect x="414.5" y="50.5" width="12.0" height="76.0" fill="none" stroke="#ffffff" stroke-width="1.0"/><path d="M420.5 50.5 L420.5 126.5" stroke="#ffffff" stroke-width="1.0" fill="none"/><path d="M414.5 66.5 L426.5 66.5" stroke="#ffffff" stroke-width="1.0" fill="none"/><path d="M414.5 82.5 L426.5 82.5" stroke="#ffffff" stroke-width="1.0" fill="none"/><path d="M414.5 98.0 L426.5 98.0" stroke="#ffffff" stroke-width="1.0" fill="none"/><path d="M414.5 113.5 L426.5 113.5" stroke="#ffffff" stroke-width="1.0" fill="none"/><rect x="416.0" y="118.0" width="2.5" height="7.0" fill="#ffffff"/><rect x="422.0" y="118.0" width="2.5" height="7.0" fill="#ffffff"/><rect x="723.0" y="324.0" width="140.0" height="39.0" fill="none" stroke="#ffffff" stroke-width="2.0"/><path d="M793.5 324.0 L793.5 363.0" stroke="#ffffff" stroke-width="1.0" fill="none"/><path d="M723.0 337.5 L793.5 337.5" stroke="#ffffff" stroke-width="1.0" fill="none"/><path d="M723.0 344.0 L863.0 344.0" stroke="#ffffff" stroke-width="1.0" fill="none"/><path d="M723.0 350.3 L863.0 350.3" stroke="#ffffff" stroke-width="1.0" fill="none"/><path d="M723.0 356.4 L863.0 356.4" stroke="#ffffff" stroke-width="1.0" fill="none"/><path d="M740.5 337.5 L740.5 363.0" stroke="#ffffff" stroke-width="1.0" fill="none"/><path d="M757.5 337.5 L757.5 363.0" stroke="#ffffff" stroke-width="1.0" fill="none"/><path d="M775.5 337.5 L775.5 363.0" stroke="#ffffff" stroke-width="1.0" fill="none"/><path d="M793.5 330.5 L863.0 330.5" stroke="#ffffff" stroke-width="1.0" fill="none"/><path d="M837.5 324.0 L837.5 330.5" stroke="#ffffff" stroke-width="1.0" fill="none"/><path d="M793.5 343.7 L863.0 343.7" stroke="#ffffff" stroke-width="1.0" fill="none"/><path d="M810.1 343.7 L810.1 363.0" stroke="#ffffff" stroke-width="1.0" fill="none"/><path d="M828.4 343.7 L828.4 363.0" stroke="#ffffff" stroke-width="1.0" fill="none"/><path d="M845.4 343.7 L845.4 363.0" stroke="#ffffff" stroke-width="1.0" fill="none"/><rect x="843.0" y="326.0" width="13.0" height="3.0" fill="#ffffff"/><rect x="804.0" y="335.0" width="50.0" height="5.0" fill="#ffffff"/><rect x="724.0" y="339.6" width="14.0" height="3.4" fill="#ffffff"/><rect x="759.0" y="339.6" width="14.0" height="3.4" fill="#ffffff"/><rect x="724.0" y="345.0" width="13.5" height="5.0" fill="#ffffff"/><rect x="759.0" y="345.0" width="14.0" height="5.0" fill="#ffffff"/><rect x="724.0" y="351.5" width="14.0" height="2.5" fill="#ffffff"/><rect x="759.0" y="351.5" width="14.0" height="2.5" fill="#ffffff"/><rect x="724.0" y="357.5" width="13.5" height="4.5" fill="#ffffff"/><rect x="759.0" y="357.5" width="14.0" height="4.5" fill="#ffffff"/><rect x="796.0" y="345.5" width="10.0" height="3.5" fill="#ffffff"/><rect x="814.0" y="345.5" width="11.0" height="3.5" fill="#ffffff"/><rect x="831.0" y="345.5" width="11.0" height="3.5" fill="#ffffff"/><rect x="796.0" y="351.5" width="11.0" height="4.5" fill="#ffffff"/><rect x="815.0" y="352.0" width="4.0" height="3.0" fill="#ffffff"/><rect x="831.0" y="352.0" width="11.0" height="3.0" fill="#ffffff"/><rect x="851.0" y="352.0" width="3.5" height="3.0" fill="#ffffff"/><rect x="796.0" y="358.0" width="11.0" height="4.0" fill="#ffffff"/><rect x="830.0" y="357.0" width="14.0" height="5.0" fill="#ffffff"/><path d="M521.5 79.5 L551.9 79.5" stroke="#00ff00" stroke-width="1.0" fill="none"/><path d="M523.6 79.5 L523.6 114.6" stroke="#00ff00" stroke-width="1.0" fill="none"/><path d="M549.8 79.5 L549.8 114.6" stroke="#00ff00" stroke-width="1.0" fill="none"/><path d="M524.0 82.5 L549.0 82.5" stroke="#ffffff" stroke-width="1.0" fill="none"/><rect x="534.5" y="98.5" width="10.0" height="15.5" fill="none" stroke="#c8c8c8" stroke-width="1.5"/><circle cx="539.5" cy="103.5" r="2.2" fill="none" stroke="#c8c8c8"/><rect x="526.0" y="108.0" width="7.0" height="6.0" fill="#c8c8c8"/><rect x="533.5" y="108.5" width="11.0" height="5.5" fill="none" stroke="#c8c8c8" stroke-width="1.0"/><path d="M537.0 98.5 L539.0 95.5 L541.0 96.0" stroke="#c8c8c8" stroke-width="1.0" fill="none"/><path d="M541.0 96.0 L551.0 103.0 L566.0 112.0" stroke="#ffffff" stroke-width="1.0" fill="none"/><rect x="563.0" y="108.0" width="3.0" height="6.0" fill="#c8c8c8"/><path d="M556.0 79.5 L590.0 79.5" stroke="#00ff00" stroke-width="1.0" fill="none"/><path d="M557.9 79.5 L557.9 114.5" stroke="#00ff00" stroke-width="1.0" fill="none"/><path d="M588.9 79.5 L588.9 114.5" stroke="#00ff00" stroke-width="1.0" fill="none"/><rect x="559.0" y="83.5" width="29.0" height="4.0" fill="#c8c8c8"/><rect x="561.5" y="87.5" width="3.0" height="4.0" fill="none" stroke="#c8c8c8" stroke-width="1.0"/><rect x="581.5" y="87.5" width="3.0" height="4.0" fill="none" stroke="#c8c8c8" stroke-width="1.0"/><path d="M581.5 87.5 L581.5 99.0" stroke="#c8c8c8" stroke-width="1.0" fill="none"/><rect x="570.5" y="108.5" width="14.0" height="5.5" fill="none" stroke="#c8c8c8" stroke-width="1.0"/><rect x="573.0" y="109.0" width="11.0" height="4.0" fill="#c8c8c8"/><rect x="567.0" y="106.5" width="5.0" height="3.5" fill="none" stroke="#c8c8c8" stroke-width="1.0"/><path d="M506.0 114.5 L604.0 114.5" stroke="#ffff00" stroke-width="1.0" fill="none"/><path d="M510.0 119.5 L514.0 115.5 L518.0 119.5" stroke="#00ffff" stroke-width="1.0" fill="none"/><path d="M509.0 116.5 L519.0 116.5" stroke="#00ffff" stroke-width="1.0" fill="none"/><path d="M549.0 119.5 L553.0 115.5 L557.0 119.5" stroke="#00ffff" stroke-width="1.0" fill="none"/><path d="M548.0 116.5 L558.0 116.5" stroke="#00ffff" stroke-width="1.0" fill="none"/><path d="M593.0 119.5 L597.0 115.5 L601.0 119.5" stroke="#00ffff" stroke-width="1.0" fill="none"/><path d="M592.0 116.5 L602.0 116.5" stroke="#00ffff" stroke-width="1.0" fill="none"/><rect x="509.0" y="111.0" width="10.0" height="3.0" fill="url(#mt)"/><path d="M508.0 114.5 L520.0 114.5" stroke="#00ffff" stroke-width="1.0" fill="none"/><rect x="514.0" y="76.5" width="7.0" height="2.5" fill="url(#mt)"/><path d="M513.0 79.5 L522.0 79.5" stroke="#00ffff" stroke-width="1.0" fill="none"/><rect x="590.0" y="79.5" width="10.0" height="2.5" fill="url(#mt)"/><path d="M589.0 82.5 L601.0 82.5" stroke="#00ffff" stroke-width="1.0" fill="none"/><rect x="551.0" y="109.5" width="8.0" height="2.5" fill="url(#mt)"/><path d="M550.0 112.5 L560.0 112.5" stroke="#00ffff" stroke-width="1.0" fill="none"/><rect x="593.0" y="111.0" width="10.0" height="3.0" fill="url(#mt)"/><path d="M592.0 114.5 L604.0 114.5" stroke="#00ffff" stroke-width="1.0" fill="none"/><path d="M585.0 109.0 L585.0 120.5 L604.0 120.5" stroke="#ff0000" stroke-width="1.0" fill="none"/><rect x="604.5" y="111.5" width="11.0" height="16.0" fill="none" stroke="#00ff00" stroke-width="1.0"/><path d="M604.5 112.2 L615.5 112.2" stroke="#00ff00" stroke-width="1.0" fill="none"/><path d="M604.5 124.5 L615.5 124.5" stroke="#00ff00" stroke-width="1.0" fill="none"/><path d="M610.0 107.0 L610.0 124.0" stroke="#c8c8c8" stroke-width="1.0" fill="none"/><rect x="607.0" y="118.0" width="6.0" height="5.0" fill="#c8c8c8"/><rect x="609.0" y="119.0" width="2.0" height="2.0" fill="#000"/><rect x="609.0" y="106.0" width="4.0" height="4.0" fill="#c8c8c8"/><path d="M606.0 112.0 L609.0 109.0" stroke="#c8c8c8" stroke-width="1.0" fill="none"/><path d="M595.0 116.5 L604.0 116.5" stroke="#ffff00" stroke-width="1.0" fill="none"/><path d="M616.0 116.5 L624.0 116.5" stroke="#ffff00" stroke-width="1.0" fill="none"/><path d="M616.0 121.5 L620.0 117.5 L624.0 121.5" stroke="#00ffff" stroke-width="1.0" fill="none"/><path d="M615.0 118.5 L625.0 118.5" stroke="#00ffff" stroke-width="1.0" fill="none"/><rect x="615.0" y="106.0" width="10.0" height="3.5" fill="url(#mt)"/><path d="M614.0 110.0 L626.0 110.0" stroke="#00ffff" stroke-width="1.0" fill="none"/><rect x="616.0" y="126.0" width="10.0" height="4.0" fill="#ff00ff"/><path d="M615.0 125.5 L625.0 125.5" stroke="#00ffff" stroke-width="1.0" fill="none"/><rect x="595.0" y="112.0" width="7.0" height="3.0" fill="url(#mt)"/><path d="M594.0 115.5 L603.0 115.5" stroke="#00ffff" stroke-width="1.0" fill="none"/><path d="M616.0 112.0 L618.5 112.0 L618.5 115.0 L633.4 115.0 L633.4 179.2 L700.0 179.2" stroke="#ff0000" stroke-width="1.0" fill="none"/><path d="M650.0 84.5 L681.0 84.5" stroke="#00ff00" stroke-width="1.0" fill="none"/><path d="M650.7 84.5 L650.7 114.5" stroke="#00ff00" stroke-width="1.0" fill="none"/><path d="M679.7 84.5 L679.7 114.5" stroke="#00ff00" stroke-width="1.0" fill="none"/><rect x="651.0" y="86.5" width="28.0" height="4.5" fill="#c8c8c8"/><rect x="655.0" y="91.0" width="3.0" height="6.0" fill="#c8c8c8"/><rect x="672.0" y="91.0" width="3.0" height="6.0" fill="#c8c8c8"/><path d="M671.0 91.0 L671.0 105.0" stroke="#c8c8c8" stroke-width="1.0" fill="none"/><rect x="661.0" y="108.0" width="18.0" height="6.0" fill="#c8c8c8"/><path d="M639.0 114.5 L688.0 114.5" stroke="#ffff00" stroke-width="1.0" fill="none"/><path d="M641.0 119.5 L645.0 115.5 L649.0 119.5" stroke="#00ffff" stroke-width="1.0" fill="none"/><path d="M640.0 116.5 L650.0 116.5" stroke="#00ffff" stroke-width="1.0" fill="none"/><path d="M679.0 119.5 L683.0 115.5 L687.0 119.5" stroke="#00ffff" stroke-width="1.0" fill="none"/><path d="M678.0 116.5 L688.0 116.5" stroke="#00ffff" stroke-width="1.0" fill="none"/><rect x="642.0" y="111.0" width="16.0" height="3.0" fill="url(#mt)"/><path d="M641.0 114.5 L659.0 114.5" stroke="#00ffff" stroke-width="1.0" fill="none"/><rect x="683.0" y="82.5" width="11.0" height="3.5" fill="url(#mt)"/><path d="M682.0 86.5 L695.0 86.5" stroke="#00ffff" stroke-width="1.0" fill="none"/><path d="M668.3 114.0 L668.3 174.5 L768.7 174.5 L768.7 246.3 L679.4 246.3 L679.4 235.6" stroke="#ff0000" stroke-width="1.0" fill="none"/><path d="M720.0 88.5 L739.7 88.5" stroke="#00ff00" stroke-width="1.0" fill="none"/><path d="M722.5 88.5 L722.5 115.5" stroke="#00ff00" stroke-width="2.0" fill="none"/><path d="M738.3 88.5 L738.3 115.5" stroke="#00ff00" stroke-width="2.0" fill="none"/><path d="M722.0 91.7 L739.0 91.7" stroke="#ffffff" stroke-width="1.0" fill="none"/><rect x="725.0" y="105.0" width="11.0" height="10.5" fill="#ffffff"/><rect x="726.5" y="107.0" width="3.5" height="2.0" fill="#000"/><rect x="731.0" y="107.0" width="3.5" height="2.0" fill="#000"/><path d="M714.0 116.5 L746.0 116.5" stroke="#ffffff" stroke-width="1.0" fill="none"/><path d="M733.5 115.0 L733.5 124.0 L784.4 124.0 L784.4 212.3" stroke="#ff0000" stroke-width="1.0" fill="none"/><path d="M792.2 162.2 L792.2 95.0 L846.9 95.0" stroke="#ff0000" stroke-width="1.0" fill="none"/><path d="M803.0 83.0 L803.0 95.0" stroke="#00ffff" stroke-width="1.0" fill="none"/><path d="M799.0 89.0 L806.0 89.0" stroke="#00ffff" stroke-width="1.0" fill="none"/><path d="M800.0 95.0 L808.0 95.0" stroke="#00ffff" stroke-width="1.0" fill="none"/><rect x="802.0" y="83.0" width="4.0" height="3.0" fill="#00ffff"/><rect x="824.8" y="94.2" width="11.5" height="7.4" fill="none" stroke="#00ff00" stroke-width="1.0"/><path d="M820.0 90.2 L846.0 90.2" stroke="#ffff00" stroke-width="1.0" fill="none"/><path d="M818.0 91.0 L826.0 84.0 L829.0 91.0 L835.0 84.0 L842.0 91.0" stroke="#00ffff" stroke-width="1.0" fill="none"/><path d="M829.0 80.0 L829.0 90.0" stroke="#00ffff" stroke-width="1.0" fill="none"/><path d="M829.0 80.0 L838.0 80.0" stroke="#00ffff" stroke-width="1.0" fill="none"/><rect x="829.0" y="79.0" width="9.0" height="4.0" fill="url(#mt)"/><rect x="837.0" y="86.0" width="12.0" height="3.0" fill="url(#mt)"/><rect x="837.0" y="98.0" width="12.0" height="5.0" fill="url(#mt)"/><rect x="815.0" y="96.0" width="10.0" height="4.0" fill="url(#mt)"/><path d="M814.0 101.5 L824.0 101.5" stroke="#00ffff" stroke-width="1.0" fill="none"/><rect x="797.0" y="107.0" width="11.0" height="5.0" fill="#ff00ff"/><path d="M797.0 112.5 L809.0 112.5" stroke="#ff0000" stroke-width="1.0" fill="none"/><rect x="814.0" y="107.0" width="28.0" height="5.0" fill="#ff00ff"/><path d="M814.0 112.5 L843.0 112.5" stroke="#ff0000" stroke-width="1.0" fill="none"/><rect x="603.0" y="134.0" width="12.0" height="4.5" fill="url(#mt)"/><path d="M602.0 139.0 L616.0 139.0" stroke="#ff0000" stroke-width="1.0" fill="none"/><path d="M602.0 140.0 L616.0 140.0" stroke="#00ffff" stroke-width="1.0" fill="none"/><rect x="671.0" y="134.0" width="16.0" height="5.0" fill="url(#mt)"/><path d="M670.0 139.5 L688.0 139.5" stroke="#ff0000" stroke-width="1.0" fill="none"/><path d="M670.0 140.5 L688.0 140.5" stroke="#00ffff" stroke-width="1.0" fill="none"/><rect x="722.0" y="134.0" width="14.0" height="5.0" fill="url(#mt)"/><path d="M721.0 139.5 L737.0 139.5" stroke="#ff0000" stroke-width="1.0" fill="none"/><path d="M721.0 140.5 L737.0 140.5" stroke="#00ffff" stroke-width="1.0" fill="none"/><rect x="820.0" y="134.0" width="16.0" height="5.0" fill="url(#mt)"/><path d="M819.0 139.5 L837.0 139.5" stroke="#ff0000" stroke-width="1.0" fill="none"/><path d="M819.0 140.5 L837.0 140.5" stroke="#00ffff" stroke-width="1.0" fill="none"/><rect x="559.0" y="134.5" width="26.0" height="4.5" fill="url(#mt)"/><path d="M558.0 139.5 L586.0 139.5" stroke="#00ffff" stroke-width="1.0" fill="none"/><rect x="631.0" y="139.0" width="4.0" height="2.5" fill="#ff00ff"/><rect x="667.0" y="140.0" width="4.0" height="2.5" fill="#ff00ff"/><path d="M792.2 162.2 L827.6 162.2 L827.6 206.0" stroke="#ff0000" stroke-width="1.0" fill="none"/><rect x="815.0" y="160.5" width="4.0" height="3.5" fill="#ff00ff"/><rect x="779.0" y="161.0" width="5.0" height="14.0" fill="#ff00ff"/><!-- r2 --><path d="M593.5 150.0 L593.5 214.0" stroke="#ffffff" stroke-width="1.0" fill="none"/><path d="M593.0 150.5 L601.0 150.5" stroke="#ffffff" stroke-width="1.0" fill="none"/><path d="M600.5 150.0 L600.5 157.0" stroke="#ffffff" stroke-width="1.0" fill="none"/><path d="M598.0 157.0 L611.0 144.0" stroke="#c8c8c8" stroke-width="2.0" fill="none"/><path d="M601.0 151.0 L606.0 147.0" stroke="#c8c8c8" stroke-width="1.0" fill="none"/><path d="M606.0 157.0 L609.0 152.0 L612.0 157.0" stroke="#c8c8c8" stroke-width="1.0" fill="none"/><rect x="608.0" y="154.0" width="3.0" height="3.0" fill="#c8c8c8"/><path d="M594.0 158.3 L612.0 158.3" stroke="#ffff00" stroke-width="1.0" fill="none"/><path d="M612.0 158.5 L623.0 158.5" stroke="#00ffff" stroke-width="1.0" fill="none"/><rect x="613.0" y="154.0" width="11.0" height="3.5" fill="url(#mt)"/><rect x="597.0" y="143.5" width="5.0" height="3.5" fill="url(#mt)"/><path d="M533.0 154.6 L565.0 154.6" stroke="#00ff00" stroke-width="2.0" fill="none"/><path d="M535.7 154.6 L535.7 195.0" stroke="#00ff00" stroke-width="2.0" fill="none"/><path d="M563.4 154.6 L563.4 184.0" stroke="#00ff00" stroke-width="2.0" fill="none"/><path d="M536.0 163.4 L564.0 163.4" stroke="#00ffff" stroke-width="1.0" fill="none"/><path d="M536.0 183.9 L570.6 183.9" stroke="#00ff00" stroke-width="2.0" fill="none"/><path d="M536.0 194.5 L570.6 194.5" stroke="#00ff00" stroke-width="2.0" fill="none"/><path d="M570.6 183.9 L570.6 195.0" stroke="#00ff00" stroke-width="2.0" fill="none"/><path d="M553.5 170.0 L553.5 192.0" stroke="#c8c8c8" stroke-width="1.0" fill="none"/><rect x="550.5" y="177.5" width="6.0" height="6.0" fill="none" stroke="#c8c8c8" stroke-width="1.0"/><path d="M548.0 193.0 L551.0 184.0" stroke="#c8c8c8" stroke-width="1.0" fill="none"/><path d="M544.0 190.0 L560.0 190.0" stroke="#ffffff" stroke-width="1.0" fill="none"/><path d="M553.0 168.0 L553.0 172.0" stroke="#ffffff" stroke-width="1.0" fill="none"/><path d="M525.0 185.4 L536.0 185.4" stroke="#00ffff" stroke-width="1.0" fill="none"/><path d="M570.0 186.0 L625.0 186.0" stroke="#00ffff" stroke-width="1.0" fill="none"/><path d="M588.0 190.5 L620.0 190.5" stroke="#00ffff" stroke-width="1.0" fill="none"/><path d="M540.0 187.5 L570.0 187.5" stroke="#00ffff" stroke-width="1.0" fill="none"/><path d="M524.0 192.0 L536.0 192.0" stroke="#00ffff" stroke-width="1.0" fill="none"/><path d="M535.0 195.0 L535.0 220.0" stroke="#00ffff" stroke-width="1.0" fill="none"/><path d="M538.0 195.0 L538.0 220.0" stroke="#00ffff" stroke-width="1.0" fill="none"/><path d="M570.0 195.0 L570.0 220.0" stroke="#00ffff" stroke-width="1.0" fill="none"/><path d="M573.0 195.0 L573.0 220.0" stroke="#00ffff" stroke-width="1.0" fill="none"/><rect x="525.0" y="150.5" width="11.0" height="3.0" fill="url(#mt)"/><path d="M524.0 154.0 L537.0 154.0" stroke="#00ffff" stroke-width="1.0" fill="none"/><rect x="544.0" y="170.5" width="11.0" height="4.0" fill="url(#mt)"/><path d="M543.0 175.0 L556.0 175.0" stroke="#00ffff" stroke-width="1.0" fill="none"/><rect x="544.0" y="176.0" width="12.0" height="2.0" fill="url(#mt)"/><path d="M543.0 178.5 L557.0 178.5" stroke="#00ffff" stroke-width="1.0" fill="none"/><rect x="527.0" y="181.0" width="8.0" height="3.0" fill="url(#mt)"/><path d="M526.0 184.5 L536.0 184.5" stroke="#00ffff" stroke-width="1.0" fill="none"/><rect x="527.0" y="189.0" width="8.0" height="3.0" fill="url(#mt)"/><path d="M526.0 192.5 L536.0 192.5" stroke="#00ffff" stroke-width="1.0" fill="none"/><rect x="578.0" y="181.0" width="12.0" height="3.5" fill="url(#mt)"/><path d="M577.0 185.0 L591.0 185.0" stroke="#00ffff" stroke-width="1.0" fill="none"/><path d="M570.7 188.7 L587.3 201.9" stroke="#00ff00" stroke-width="1.0" fill="none"/><path d="M570.7 194.9 L588.0 208.0" stroke="#00ff00" stroke-width="1.0" fill="none"/><rect x="588.2" y="201.0" width="9.6" height="18.3" fill="none" stroke="#00ff00" stroke-width="1.0"/><path d="M588.2 215.0 L597.8 215.0" stroke="#00ff00" stroke-width="1.0" fill="none"/><rect x="591.5" y="182.5" width="6.0" height="8.0" fill="none" stroke="#c8c8c8" stroke-width="1.0"/><path d="M592.5 190.0 L592.5 214.0" stroke="#c8c8c8" stroke-width="1.0" fill="none"/><path d="M595.5 190.0 L595.5 214.0" stroke="#c8c8c8" stroke-width="1.0" fill="none"/><rect x="590.5" y="207.5" width="7.0" height="6.0" fill="none" stroke="#c8c8c8" stroke-width="1.0"/><path d="M580.0 186.5 L621.0 186.5" stroke="#00ff00" stroke-width="1.0" fill="none"/><path d="M587.4 186.5 L587.4 202.0" stroke="#00ff00" stroke-width="1.0" fill="none"/><path d="M600.0 195.4 L617.0 195.4" stroke="#00ff00" stroke-width="1.0" fill="none"/><path d="M600.0 195.4 L600.0 203.0" stroke="#00ff00" stroke-width="1.0" fill="none"/><path d="M616.5 186.0 L616.5 210.0" stroke="#00ff00" stroke-width="1.0" fill="none"/><path d="M620.8 186.0 L620.8 210.0" stroke="#00ff00" stroke-width="1.0" fill="none"/><rect x="595.0" y="186.0" width="9.0" height="3.0" fill="url(#mt)"/><path d="M594.0 189.5 L605.0 189.5" stroke="#00ffff" stroke-width="1.0" fill="none"/><rect x="599.0" y="201.5" width="8.0" height="3.0" fill="url(#mt)"/><path d="M598.0 205.0 L608.0 205.0" stroke="#00ffff" stroke-width="1.0" fill="none"/><rect x="605.0" y="198.0" width="8.0" height="3.0" fill="url(#mt)"/><path d="M604.0 201.5 L614.0 201.5" stroke="#00ffff" stroke-width="1.0" fill="none"/><rect x="600.0" y="208.0" width="8.0" height="3.0" fill="url(#mt)"/><path d="M599.0 211.5 L609.0 211.5" stroke="#00ffff" stroke-width="1.0" fill="none"/><rect x="617.0" y="187.0" width="4.0" height="2.0" fill="url(#mt)"/><path d="M616.0 189.5 L622.0 189.5" stroke="#00ffff" stroke-width="1.0" fill="none"/><rect x="622.0" y="187.0" width="9.0" height="3.0" fill="url(#mt)"/><path d="M621.0 190.5 L632.0 190.5" stroke="#00ffff" stroke-width="1.0" fill="none"/><path d="M619.0 210.0 L619.0 214.0 L628.0 214.0" stroke="#ff0000" stroke-width="1.0" fill="none"/><path d="M429.0 220.5 L448.4 220.5" stroke="#ffff00" stroke-width="1.0" fill="none"/><path d="M509.8 220.5 L646.2 220.5" stroke="#ffff00" stroke-width="1.0" fill="none"/><path d="M765.0 220.5 L795.0 220.5" stroke="#ffff00" stroke-width="1.0" fill="none"/><path d="M431.0 225.5 L435.0 221.5 L439.0 225.5" stroke="#00ffff" stroke-width="1.0" fill="none"/><path d="M430.0 222.5 L440.0 222.5" stroke="#00ffff" stroke-width="1.0" fill="none"/><path d="M439.0 225.5 L443.0 221.5 L447.0 225.5" stroke="#00ffff" stroke-width="1.0" fill="none"/><path d="M438.0 222.5 L448.0 222.5" stroke="#00ffff" stroke-width="1.0" fill="none"/><path d="M536.0 225.5 L540.0 221.5 L544.0 225.5" stroke="#00ffff" stroke-width="1.0" fill="none"/><path d="M535.0 222.5 L545.0 222.5" stroke="#00ffff" stroke-width="1.0" fill="none"/><path d="M544.0 225.5 L548.0 221.5 L552.0 225.5" stroke="#00ffff" stroke-width="1.0" fill="none"/><path d="M543.0 222.5 L553.0 222.5" stroke="#00ffff" stroke-width="1.0" fill="none"/><path d="M566.0 225.5 L570.0 221.5 L574.0 225.5" stroke="#00ffff" stroke-width="1.0" fill="none"/><path d="M565.0 222.5 L575.0 222.5" stroke="#00ffff" stroke-width="1.0" fill="none"/><path d="M576.0 225.5 L580.0 221.5 L584.0 225.5" stroke="#00ffff" stroke-width="1.0" fill="none"/><path d="M575.0 222.5 L585.0 222.5" stroke="#00ffff" stroke-width="1.0" fill="none"/><path d="M602.0 225.5 L606.0 221.5 L610.0 225.5" stroke="#00ffff" stroke-width="1.0" fill="none"/><path d="M601.0 222.5 L611.0 222.5" stroke="#00ffff" stroke-width="1.0" fill="none"/><path d="M621.0 225.5 L625.0 221.5 L629.0 225.5" stroke="#00ffff" stroke-width="1.0" fill="none"/><path d="M620.0 222.5 L630.0 222.5" stroke="#00ffff" stroke-width="1.0" fill="none"/><path d="M628.0 225.5 L632.0 221.5 L636.0 225.5" stroke="#00ffff" stroke-width="1.0" fill="none"/><path d="M627.0 222.5 L637.0 222.5" stroke="#00ffff" stroke-width="1.0" fill="none"/><path d="M636.0 225.5 L640.0 221.5 L644.0 225.5" stroke="#00ffff" stroke-width="1.0" fill="none"/><path d="M635.0 222.5 L645.0 222.5" stroke="#00ffff" stroke-width="1.0" fill="none"/><path d="M511.0 225.5 L515.0 221.5 L519.0 225.5" stroke="#00ffff" stroke-width="1.0" fill="none"/><path d="M510.0 222.5 L520.0 222.5" stroke="#00ffff" stroke-width="1.0" fill="none"/><path d="M519.0 225.5 L523.0 221.5 L527.0 225.5" stroke="#00ffff" stroke-width="1.0" fill="none"/><path d="M518.0 222.5 L528.0 222.5" stroke="#00ffff" stroke-width="1.0" fill="none"/><path d="M776.0 225.5 L780.0 221.5 L784.0 225.5" stroke="#00ffff" stroke-width="1.0" fill="none"/><path d="M775.0 222.5 L785.0 222.5" stroke="#00ffff" stroke-width="1.0" fill="none"/><path d="M791.0 225.5 L795.0 221.5 L799.0 225.5" stroke="#00ffff" stroke-width="1.0" fill="none"/><path d="M790.0 222.5 L800.0 222.5" stroke="#00ffff" stroke-width="1.0" fill="none"/><path d="M538.4 195.0 L538.4 224.0 L522.0 224.0" stroke="#ff0000" stroke-width="1.0" fill="none"/><path d="M505.5 262.0 L505.5 224.4 L536.0 224.4" stroke="#ff0000" stroke-width="1.0" fill="none"/><path d="M559.3 195.0 L559.3 283.3" stroke="#ff0000" stroke-width="1.0" fill="none"/><path d="M593.4 214.0 L593.4 283.3" stroke="#ff0000" stroke-width="1.0" fill="none"/><rect x="557.5" y="243.0" width="3.5" height="3.0" fill="#ff00ff"/><rect x="591.5" y="243.0" width="3.5" height="3.0" fill="#ff00ff"/><path d="M481.6 181.5 L509.8 181.5" stroke="#00ff00" stroke-width="1.0" fill="none"/><path d="M481.6 183.6 L509.8 183.6" stroke="#00ff00" stroke-width="1.0" fill="none"/><path d="M481.6 181.5 L481.6 256.4" stroke="#00ff00" stroke-width="1.0" fill="none"/><path d="M509.8 181.5 L509.8 271.4" stroke="#00ff00" stroke-width="1.0" fill="none"/><path d="M482.0 186.7 L509.0 186.7" stroke="#ffffff" stroke-width="1.0" fill="none"/><rect x="482.0" y="188.5" width="26.0" height="4.1" fill="#c8c8c8"/><path d="M499.0 193.0 L499.0 210.0" stroke="#c8c8c8" stroke-width="1.0" fill="none"/><path d="M448.4 217.6 L509.8 217.6" stroke="#00ff00" stroke-width="1.0" fill="none"/><path d="M449.0 217.6 L449.0 260.3" stroke="#00ff00" stroke-width="1.0" fill="none"/><path d="M449.0 260.3 L478.0 260.3 L478.0 271.4 L509.7 271.4" stroke="#00ff00" stroke-width="1.0" fill="none"/><path d="M449.0 256.4 L481.0 256.4" stroke="#00ff00" stroke-width="1.0" fill="none"/><path d="M481.3 256.0 L481.3 267.0 L509.0 267.0" stroke="#00ff00" stroke-width="1.0" fill="none"/><path d="M487.0 249.0 L487.0 259.0 L481.0 259.0" stroke="#00ff00" stroke-width="1.0" fill="none"/><path d="M486.0 261.0 L494.0 261.0" stroke="#00ff00" stroke-width="1.0" fill="none"/><path d="M490.0 257.0 L490.0 265.0" stroke="#00ff00" stroke-width="1.0" fill="none"/><circle cx="490" cy="261" r="2.5" fill="none" stroke="#00ff00"/><path d="M437.0 252.6 L509.0 252.6" stroke="#00ffff" stroke-width="1.0" fill="none"/><path d="M449.0 250.4 L481.0 250.4" stroke="#00ffff" stroke-width="1.0" fill="none"/><path d="M436.0 249.0 L449.0 249.0" stroke="#ff0000" stroke-width="1.0" fill="none"/><path d="M436.0 253.5 L449.0 253.5" stroke="#ff0000" stroke-width="1.0" fill="none"/><path d="M431.0 251.5 L449.0 251.5" stroke="#ffffff" stroke-width="1.0" fill="none"/><path d="M456.5 257.0 L456.5 283.3" stroke="#ff0000" stroke-width="1.0" fill="none"/><path d="M503.4 218.0 L503.4 262.0" stroke="#ffffff" stroke-width="1.0" fill="none"/><path d="M459.8 210.0 L459.8 255.0" stroke="#ffffff" stroke-width="1.0" fill="none"/><path d="M463.5 210.0 L463.5 256.0" stroke="#ffffff" stroke-width="1.0" fill="none"/><path d="M469 203L472 201L474 215L473 232L472 248L469 258L467 258L466 240L467 222Z" fill="#c8c8c8"/><rect x="469.0" y="222.0" width="1.0" height="14.0" fill="#000"/><path d="M461.0 217.6 L461.0 256.4" stroke="#00ff00" stroke-width="1.0" fill="none"/><path d="M459.5 210.0 L461.0 206.0 L462.5 210.0" stroke="#ffffff" stroke-width="1.0" fill="none"/><path d="M483.0 210.0 L484.5 206.0 L486.0 210.0" stroke="#ffffff" stroke-width="1.0" fill="none"/><path d="M490.0 210.0 L491.5 206.0 L493.0 210.0" stroke="#ffffff" stroke-width="1.0" fill="none"/><rect x="499.5" y="259.5" width="6.0" height="8.0" fill="none" stroke="#c8c8c8" stroke-width="1.0"/><path d="M502.0 254.0 L502.0 260.0" stroke="#c8c8c8" stroke-width="1.0" fill="none"/><rect x="500.0" y="262.0" width="5.0" height="5.0" fill="#c8c8c8"/><path d="M497.0 268.0 L507.0 268.0" stroke="#c8c8c8" stroke-width="1.0" fill="none"/><rect x="472.0" y="180.0" width="9.0" height="3.0" fill="url(#mt)"/><path d="M471.0 183.5 L482.0 183.5" stroke="#00ffff" stroke-width="1.0" fill="none"/><rect x="432.0" y="215.0" width="10.0" height="3.0" fill="url(#mt)"/><path d="M431.0 218.5 L443.0 218.5" stroke="#00ffff" stroke-width="1.0" fill="none"/><rect x="445.0" y="212.0" width="10.0" height="3.0" fill="url(#mt)"/><path d="M444.0 215.5 L456.0 215.5" stroke="#00ffff" stroke-width="1.0" fill="none"/><rect x="436.0" y="243.0" width="8.0" height="3.0" fill="url(#mt)"/><path d="M435.0 246.5 L445.0 246.5" stroke="#00ffff" stroke-width="1.0" fill="none"/><rect x="451.0" y="245.5" width="9.0" height="2.5" fill="url(#mt)"/><path d="M450.0 248.5 L461.0 248.5" stroke="#00ffff" stroke-width="1.0" fill="none"/><rect x="471.0" y="247.0" width="9.0" height="3.0" fill="url(#mt)"/><path d="M470.0 250.5 L481.0 250.5" stroke="#00ffff" stroke-width="1.0" fill="none"/><rect x="491.0" y="247.0" width="9.0" height="3.0" fill="url(#mt)"/><path d="M490.0 250.5 L501.0 250.5" stroke="#00ffff" stroke-width="1.0" fill="none"/><rect x="511.0" y="262.0" width="8.0" height="3.0" fill="url(#mt)"/><path d="M510.0 265.5 L520.0 265.5" stroke="#00ffff" stroke-width="1.0" fill="none"/><rect x="514.0" y="215.0" width="9.0" height="3.0" fill="url(#mt)"/><rect x="520.0" y="226.0" width="2.0" height="4.0" fill="#ff00ff"/><path d="M646.2 191.5 L765.0 191.5" stroke="#00ffff" stroke-width="1.0" fill="none"/><path d="M646.2 197.5 L765.0 197.5" stroke="#00ff00" stroke-width="1.0" fill="none"/><path d="M646.2 203.0 L765.0 203.0" stroke="#00ff00" stroke-width="1.0" fill="none"/><path d="M646.2 230.3 L765.0 230.3" stroke="#00ff00" stroke-width="1.0" fill="none"/><path d="M646.2 235.6 L765.0 235.6" stroke="#00ff00" stroke-width="1.0" fill="none"/><path d="M646.2 191.5 L646.2 235.6" stroke="#00ff00" stroke-width="1.0" fill="none"/><path d="M764.9 191.5 L764.9 235.6" stroke="#00ff00" stroke-width="1.0" fill="none"/><path d="M665.5 191.5 L665.5 230.3" stroke="#00ff00" stroke-width="1.0" fill="none"/><path d="M694.8 191.5 L694.8 230.3" stroke="#00ff00" stroke-width="1.0" fill="none"/><path d="M757.0 191.5 L757.0 230.3" stroke="#00ff00" stroke-width="1.0" fill="none"/><path d="M761.5 191.5 L761.5 230.3" stroke="#00ff00" stroke-width="1.0" fill="none"/><rect x="668.0" y="227.5" width="25.0" height="2.8" fill="#00ff00"/><rect x="670.0" y="226.5" width="1.0" height="1.0" fill="#ffffff"/><rect x="674.0" y="226.5" width="1.0" height="1.0" fill="#ffffff"/><rect x="678.0" y="226.5" width="1.0" height="1.0" fill="#ffffff"/><rect x="682.0" y="226.5" width="1.0" height="1.0" fill="#ffffff"/><rect x="686.0" y="226.5" width="1.0" height="1.0" fill="#ffffff"/><rect x="690.0" y="226.5" width="1.0" height="1.0" fill="#ffffff"/><rect x="697.0" y="227.5" width="43.0" height="2.8" fill="#00ff00"/><rect x="699.0" y="226.5" width="1.0" height="1.0" fill="#ffffff"/><rect x="703.0" y="226.5" width="1.0" height="1.0" fill="#ffffff"/><rect x="707.0" y="226.5" width="1.0" height="1.0" fill="#ffffff"/><rect x="711.0" y="226.5" width="1.0" height="1.0" fill="#ffffff"/><rect x="715.0" y="226.5" width="1.0" height="1.0" fill="#ffffff"/><rect x="719.0" y="226.5" width="1.0" height="1.0" fill="#ffffff"/><rect x="723.0" y="226.5" width="1.0" height="1.0" fill="#ffffff"/><rect x="727.0" y="226.5" width="1.0" height="1.0" fill="#ffffff"/><rect x="731.0" y="226.5" width="1.0" height="1.0" fill="#ffffff"/><rect x="735.0" y="226.5" width="1.0" height="1.0" fill="#ffffff"/><rect x="739.0" y="226.5" width="1.0" height="1.0" fill="#ffffff"/><rect x="741.0" y="227.5" width="16.0" height="2.8" fill="#00ff00"/><rect x="743.0" y="226.5" width="1.0" height="1.0" fill="#ffffff"/><rect x="747.0" y="226.5" width="1.0" height="1.0" fill="#ffffff"/><rect x="751.0" y="226.5" width="1.0" height="1.0" fill="#ffffff"/><rect x="755.0" y="226.5" width="1.0" height="1.0" fill="#ffffff"/><rect x="650.0" y="197.0" width="10.0" height="2.5" fill="#c8c8c8"/><rect x="677.0" y="198.0" width="8.0" height="1.5" fill="#c8c8c8"/><rect x="650.0" y="213.0" width="10.0" height="5.0" fill="url(#mt)"/><rect x="675.0" y="214.0" width="8.0" height="4.0" fill="url(#mt)"/><rect x="717.0" y="214.0" width="10.0" height="4.0" fill="url(#mt)"/><rect x="652.0" y="225.0" width="10.0" height="4.0" fill="url(#mt)"/><path d="M651.0 229.5 L663.0 229.5" stroke="#00ffff" stroke-width="1.0" fill="none"/><path d="M659.0 197.0 L659.0 185.3 L765.5 185.3 L765.5 200.0" stroke="#ff0000" stroke-width="1.0" fill="none"/><path d="M700.0 179.5 L752.5 179.5 L752.5 196.0" stroke="#ff0000" stroke-width="1.0" fill="none"/><rect x="686.0" y="182.5" width="3.0" height="4.0" fill="#ff00ff"/><rect x="701.0" y="179.0" width="2.0" height="2.0" fill="#ffffff"/><path d="M707.4 235.6 L707.4 246.3" stroke="#ff0000" stroke-width="1.0" fill="none"/><path d="M734.4 235.6 L734.4 246.3" stroke="#ff0000" stroke-width="1.0" fill="none"/><rect x="717.5" y="244.0" width="2.0" height="4.5" fill="#ff00ff"/><rect x="749.0" y="246.0" width="2.0" height="2.0" fill="#ffffff"/><rect x="722.0" y="187.0" width="10.0" height="3.0" fill="url(#mt)"/><rect x="722.0" y="192.0" width="10.0" height="3.0" fill="url(#mt)"/><rect x="722.0" y="196.5" width="10.0" height="3.0" fill="url(#mt)"/><path d="M735.0 205.0 L746.0 195.0 L764.0 216.0" stroke="#ffffff" stroke-width="1.0" fill="none"/><path d="M742.0 207.0 L748.0 211.0" stroke="#ffffff" stroke-width="1.0" fill="none"/><rect x="746.0" y="194.0" width="2.0" height="2.0" fill="#ffffff"/><path d="M753.0 189.0 L753.0 229.0" stroke="#ffffff" stroke-width="1.0" fill="none"/><rect x="752.0" y="227.0" width="3.0" height="2.0" fill="#c8c8c8"/><path d="M757.5 175.0 L757.5 230.0" stroke="#c8c8c8" stroke-width="2.0" fill="none"/><rect x="755.5" y="175.5" width="4.0" height="7.0" fill="none" stroke="#c8c8c8" stroke-width="1.0"/><path d="M757.0 204.0 L760.0 204.0" stroke="#c8c8c8" stroke-width="1.0" fill="none"/><path d="M765.0 212.3 L790.0 212.3" stroke="#ff0000" stroke-width="1.0" fill="none"/><rect x="772.0" y="213.5" width="9.0" height="3.5" fill="#ff00ff"/><path d="M661.4 235.6 L661.4 283.3" stroke="#ff0000" stroke-width="1.0" fill="none"/><path d="M661.4 283.3 L667.6 283.3" stroke="#ff0000" stroke-width="1.0" fill="none"/><rect x="660.0" y="255.0" width="4.0" height="2.5" fill="#ff00ff"/><path d="M659.8 261.0 L659.8 271.0" stroke="#00ffff" stroke-width="1.0" fill="none"/><rect x="668.0" y="277.0" width="11.0" height="4.0" fill="url(#mt)"/><path d="M667.0 281.5 L680.0 281.5" stroke="#00ffff" stroke-width="1.0" fill="none"/><path d="M620.0 214.0 L646.2 214.0" stroke="#ff0000" stroke-width="1.0" fill="none"/><rect x="634.0" y="215.0" width="8.0" height="3.0" fill="url(#mt)"/><rect x="623.0" y="187.0" width="9.0" height="3.0" fill="url(#mt)"/><path d="M622.0 190.5 L633.0 190.5" stroke="#00ffff" stroke-width="1.0" fill="none"/><path d="M795.0 202.5 L826.0 202.5" stroke="#00ff00" stroke-width="2.0" fill="none"/><path d="M795.5 202.0 L795.5 227.5" stroke="#00ff00" stroke-width="1.0" fill="none"/><path d="M825.5 202.0 L825.5 227.5" stroke="#00ff00" stroke-width="1.0" fill="none"/><path d="M795.0 227.0 L826.0 227.0" stroke="#00ff00" stroke-width="1.0" fill="none"/><path d="M797.0 224.7 L821.0 224.7" stroke="#00ff00" stroke-width="1.0" fill="none"/><path d="M797.5 202.0 L797.5 225.0" stroke="#00ff00" stroke-width="2.0" fill="none"/><path d="M820.7 204.0 L820.7 225.0" stroke="#00ff00" stroke-width="1.0" fill="none"/><path d="M789.5 202.5 L796.0 202.5" stroke="#00ff00" stroke-width="2.0" fill="none"/><path d="M790.0 202.0 L790.0 219.0" stroke="#00ff00" stroke-width="2.0" fill="none"/><path d="M789.5 218.5 L796.0 218.5" stroke="#00ff00" stroke-width="1.0" fill="none"/><path d="M798.0 204.3 L801.0 204.3" stroke="#00ffff" stroke-width="1.0" fill="none"/><path d="M803.0 204.3 L806.0 204.3" stroke="#00ffff" stroke-width="1.0" fill="none"/><path d="M808.0 204.3 L811.0 204.3" stroke="#00ffff" stroke-width="1.0" fill="none"/><path d="M813.0 204.3 L816.0 204.3" stroke="#00ffff" stroke-width="1.0" fill="none"/><path d="M818.0 204.3 L821.0 204.3" stroke="#00ffff" stroke-width="1.0" fill="none"/><path d="M794.5 197.0 L794.5 215.0" stroke="#c8c8c8" stroke-width="1.0" fill="none"/><path d="M785.0 198.0 L795.0 198.0" stroke="#00ffff" stroke-width="1.0" fill="none"/><path d="M822.5 204.0 L822.5 192.5 L832.0 192.5" stroke="#00ffff" stroke-width="1.0" fill="none"/><rect x="823.0" y="189.0" width="9.0" height="3.0" fill="url(#mt)"/><rect x="813.0" y="199.0" width="10.0" height="3.5" fill="url(#mt)"/><rect x="804.0" y="220.0" width="11.0" height="3.5" fill="url(#mt)"/><rect x="830.0" y="214.0" width="10.0" height="4.0" fill="url(#mt)"/><rect x="844.0" y="219.0" width="12.0" height="4.5" fill="url(#mt)"/><rect x="785.0" y="194.0" width="10.0" height="3.5" fill="url(#mt)"/><rect x="804.0" y="235.0" width="12.0" height="5.0" fill="#ff00ff"/><path d="M803.0 240.8 L817.0 240.8" stroke="#ff0000" stroke-width="1.0" fill="none"/><path d="M827.4 205.0 L827.4 223.4 L843.0 223.4" stroke="#ff0000" stroke-width="1.0" fill="none"/><path d="M825.5 220.0 L843.0 220.0" stroke="#00ffff" stroke-width="1.0" fill="none"/><path d="M831.0 224.5 L835.0 220.5 L839.0 224.5" stroke="#00ffff" stroke-width="1.0" fill="none"/><path d="M830.0 221.5 L840.0 221.5" stroke="#00ffff" stroke-width="1.0" fill="none"/><path d="M843.0 227.5 L856.0 227.5" stroke="#00ff00" stroke-width="1.0" fill="none"/><rect x="842.0" y="222.0" width="2.0" height="2.0" fill="#00ffff"/><rect x="842.0" y="225.0" width="2.0" height="2.0" fill="#00ffff"/><rect x="842.0" y="228.0" width="2.0" height="2.0" fill="#00ffff"/><rect x="842.0" y="231.0" width="2.0" height="2.0" fill="#00ffff"/><rect x="842.0" y="234.0" width="2.0" height="2.0" fill="#00ffff"/><rect x="842.0" y="237.0" width="2.0" height="2.0" fill="#00ffff"/><rect x="842.0" y="240.0" width="2.0" height="2.0" fill="#00ffff"/><rect x="842.0" y="243.0" width="2.0" height="2.0" fill="#00ffff"/><rect x="842.0" y="246.0" width="2.0" height="2.0" fill="#00ffff"/><rect x="842.0" y="249.0" width="2.0" height="2.0" fill="#00ffff"/><path d="M843.0 250.0 L845.0 251.5 L856.0 251.5" stroke="#00ffff" stroke-width="1.5" fill="none"/><path d="M845.5 221.0 L845.5 249.0 L848.0 250.0 L856.0 250.0" stroke="#ffff00" stroke-width="1.0" fill="none"/><path d="M456.5 283.3 L626.5 283.3" stroke="#ff0000" stroke-width="1.0" fill="none"/><path d="M629.5 283.3 L661.4 283.3" stroke="#ff0000" stroke-width="1.0" fill="none"/><path d="M629.0 281.0 L627.0 283.3 L629.0 285.5" stroke="#ff00ff" stroke-width="1.0" fill="none"/><rect x="519.0" y="281.5" width="2.0" height="3.5" fill="#ff00ff"/><rect x="573.0" y="281.0" width="2.0" height="5.0" fill="#ff00ff"/><path d="M558.5 261.0 L558.5 270.0" stroke="#00ffff" stroke-width="1.0" fill="none"/><path d="M592.5 261.0 L592.5 270.0" stroke="#00ffff" stroke-width="1.0" fill="none"/><rect x="454.7" y="286.0" width="16.3" height="5.3" fill="#ff00ff"/><path d="M454.0 291.8 L473.0 291.8" stroke="#ff0000" stroke-width="1.0" fill="none"/><rect x="485.9" y="286.0" width="15.9" height="5.3" fill="#ff00ff"/><path d="M485.0 291.8 L503.0 291.8" stroke="#ff0000" stroke-width="1.0" fill="none"/><rect x="460.7" y="294.0" width="31.7" height="5.6" fill="url(#mt)"/><path d="M459.7 300.1 L493.4 300.1" stroke="#ff0000" stroke-width="1.0" fill="none"/><path d="M459.7 301.1 L493.4 301.1" stroke="#00ffff" stroke-width="1.0" fill="none"/><rect x="545.0" y="294.0" width="16.0" height="5.0" fill="url(#mt)"/><path d="M544.0 299.5 L562.0 299.5" stroke="#ff0000" stroke-width="1.0" fill="none"/><path d="M544.0 300.5 L562.0 300.5" stroke="#00ffff" stroke-width="1.0" fill="none"/><rect x="583.0" y="294.0" width="22.0" height="5.0" fill="url(#mt)"/><path d="M582.0 299.5 L606.0 299.5" stroke="#ff0000" stroke-width="1.0" fill="none"/><path d="M582.0 300.5 L606.0 300.5" stroke="#00ffff" stroke-width="1.0" fill="none"/><rect x="698.0" y="294.0" width="15.0" height="5.0" fill="url(#mt)"/><path d="M697.0 299.5 L714.0 299.5" stroke="#ff0000" stroke-width="1.0" fill="none"/><path d="M697.0 300.5 L714.0 300.5" stroke="#00ffff" stroke-width="1.0" fill="none"/><rect x="805.0" y="294.0" width="15.6" height="5.0" fill="url(#mt)"/><path d="M804.0 299.5 L821.6 299.5" stroke="#ff0000" stroke-width="1.0" fill="none"/><path d="M804.0 300.5 L821.6 300.5" stroke="#00ffff" stroke-width="1.0" fill="none"/><rect x="838.0" y="294.0" width="3.0" height="5.0" fill="#ff00ff"/><rect x="846.0" y="294.0" width="4.0" height="5.0" fill="#ff00ff"/><path d="M837.0 299.5 L851.0 299.5" stroke="#ff0000" stroke-width="1.0" fill="none"/><path d="M837.0 300.5 L851.0 300.5" stroke="#00ffff" stroke-width="1.0" fill="none"/><rect x="456.8" y="317.0" width="8.5" height="4.8" fill="#ff00ff"/><path d="M456.0 322.5 L466.0 322.5" stroke="#ff0000" stroke-width="1.0" fill="none"/><path d="M456.0 323.5 L466.0 323.5" stroke="#00ffff" stroke-width="1.0" fill="none"/><path d="M453.0 329.5 L461.5 329.5" stroke="#ff0000" stroke-width="1.0" fill="none"/><path d="M470.0 329.5 L482.0 329.5" stroke="#ff0000" stroke-width="1.0" fill="none"/><rect x="466.0" y="327.0" width="1.5" height="4.5" fill="#ff00ff"/><rect x="484.0" y="327.5" width="9.0" height="3.5" fill="url(#mt)"/><path d="M453.0 341.2 L461.5 341.2" stroke="#ff0000" stroke-width="1.0" fill="none"/><path d="M470.0 341.2 L482.0 341.2" stroke="#ff0000" stroke-width="1.0" fill="none"/><rect x="466.0" y="338.7" width="1.5" height="4.5" fill="#ff00ff"/><rect x="484.0" y="339.2" width="13.0" height="3.5" fill="url(#mt)"/><path d="M453.0 352.3 L461.5 352.3" stroke="#ff0000" stroke-width="1.0" fill="none"/><path d="M470.0 352.3 L482.0 352.3" stroke="#ff0000" stroke-width="1.0" fill="none"/><rect x="466.0" y="349.8" width="1.5" height="4.5" fill="#ff00ff"/><rect x="484.0" y="350.3" width="15.0" height="3.5" fill="url(#mt)"/><path d="M505.0 329.5 L517.0 329.5" stroke="#ff0000" stroke-width="1.0" fill="none"/><path d="M522.0 329.5 L534.0 329.5" stroke="#ff0000" stroke-width="1.0" fill="none"/><rect x="519.0" y="327.0" width="1.5" height="4.5" fill="#ff00ff"/><rect x="538.0" y="327.5" width="10.0" height="3.5" fill="url(#mt)"/><path d="M505.0 340.3 L517.0 340.3" stroke="#ff0000" stroke-width="1.0" fill="none"/><path d="M522.0 340.3 L534.0 340.3" stroke="#ff0000" stroke-width="1.0" fill="none"/><rect x="519.0" y="337.8" width="1.5" height="4.5" fill="#ff00ff"/><rect x="538.0" y="338.3" width="15.0" height="3.5" fill="url(#mt)"/><path d="M505.0 351.3 L517.0 351.3" stroke="#ff0000" stroke-width="1.0" fill="none"/><path d="M522.0 351.3 L534.0 351.3" stroke="#ff0000" stroke-width="1.0" fill="none"/><rect x="519.0" y="348.8" width="1.5" height="4.5" fill="#ff00ff"/><rect x="538.0" y="349.3" width="13.0" height="3.5" fill="url(#mt)"/><path d="M565.0 329.5 L577.0 329.5" stroke="#ff0000" stroke-width="1.0" fill="none"/><path d="M582.0 329.5 L594.0 329.5" stroke="#ff0000" stroke-width="1.0" fill="none"/><rect x="578.0" y="327.0" width="1.5" height="4.0" fill="#ff00ff"/><rect x="598.0" y="327.0" width="9.0" height="4.0" fill="url(#mt)"/><rect x="641.0" y="323.4" width="9.0" height="4.6" fill="url(#mt)"/><path d="M640.0 328.5 L651.0 328.5" stroke="#00ffff" stroke-width="1.0" fill="none"/><rect x="641.0" y="334.0" width="45.0" height="5.4" fill="url(#mt)"/></svg><!--/CAD-->
</body></html>
